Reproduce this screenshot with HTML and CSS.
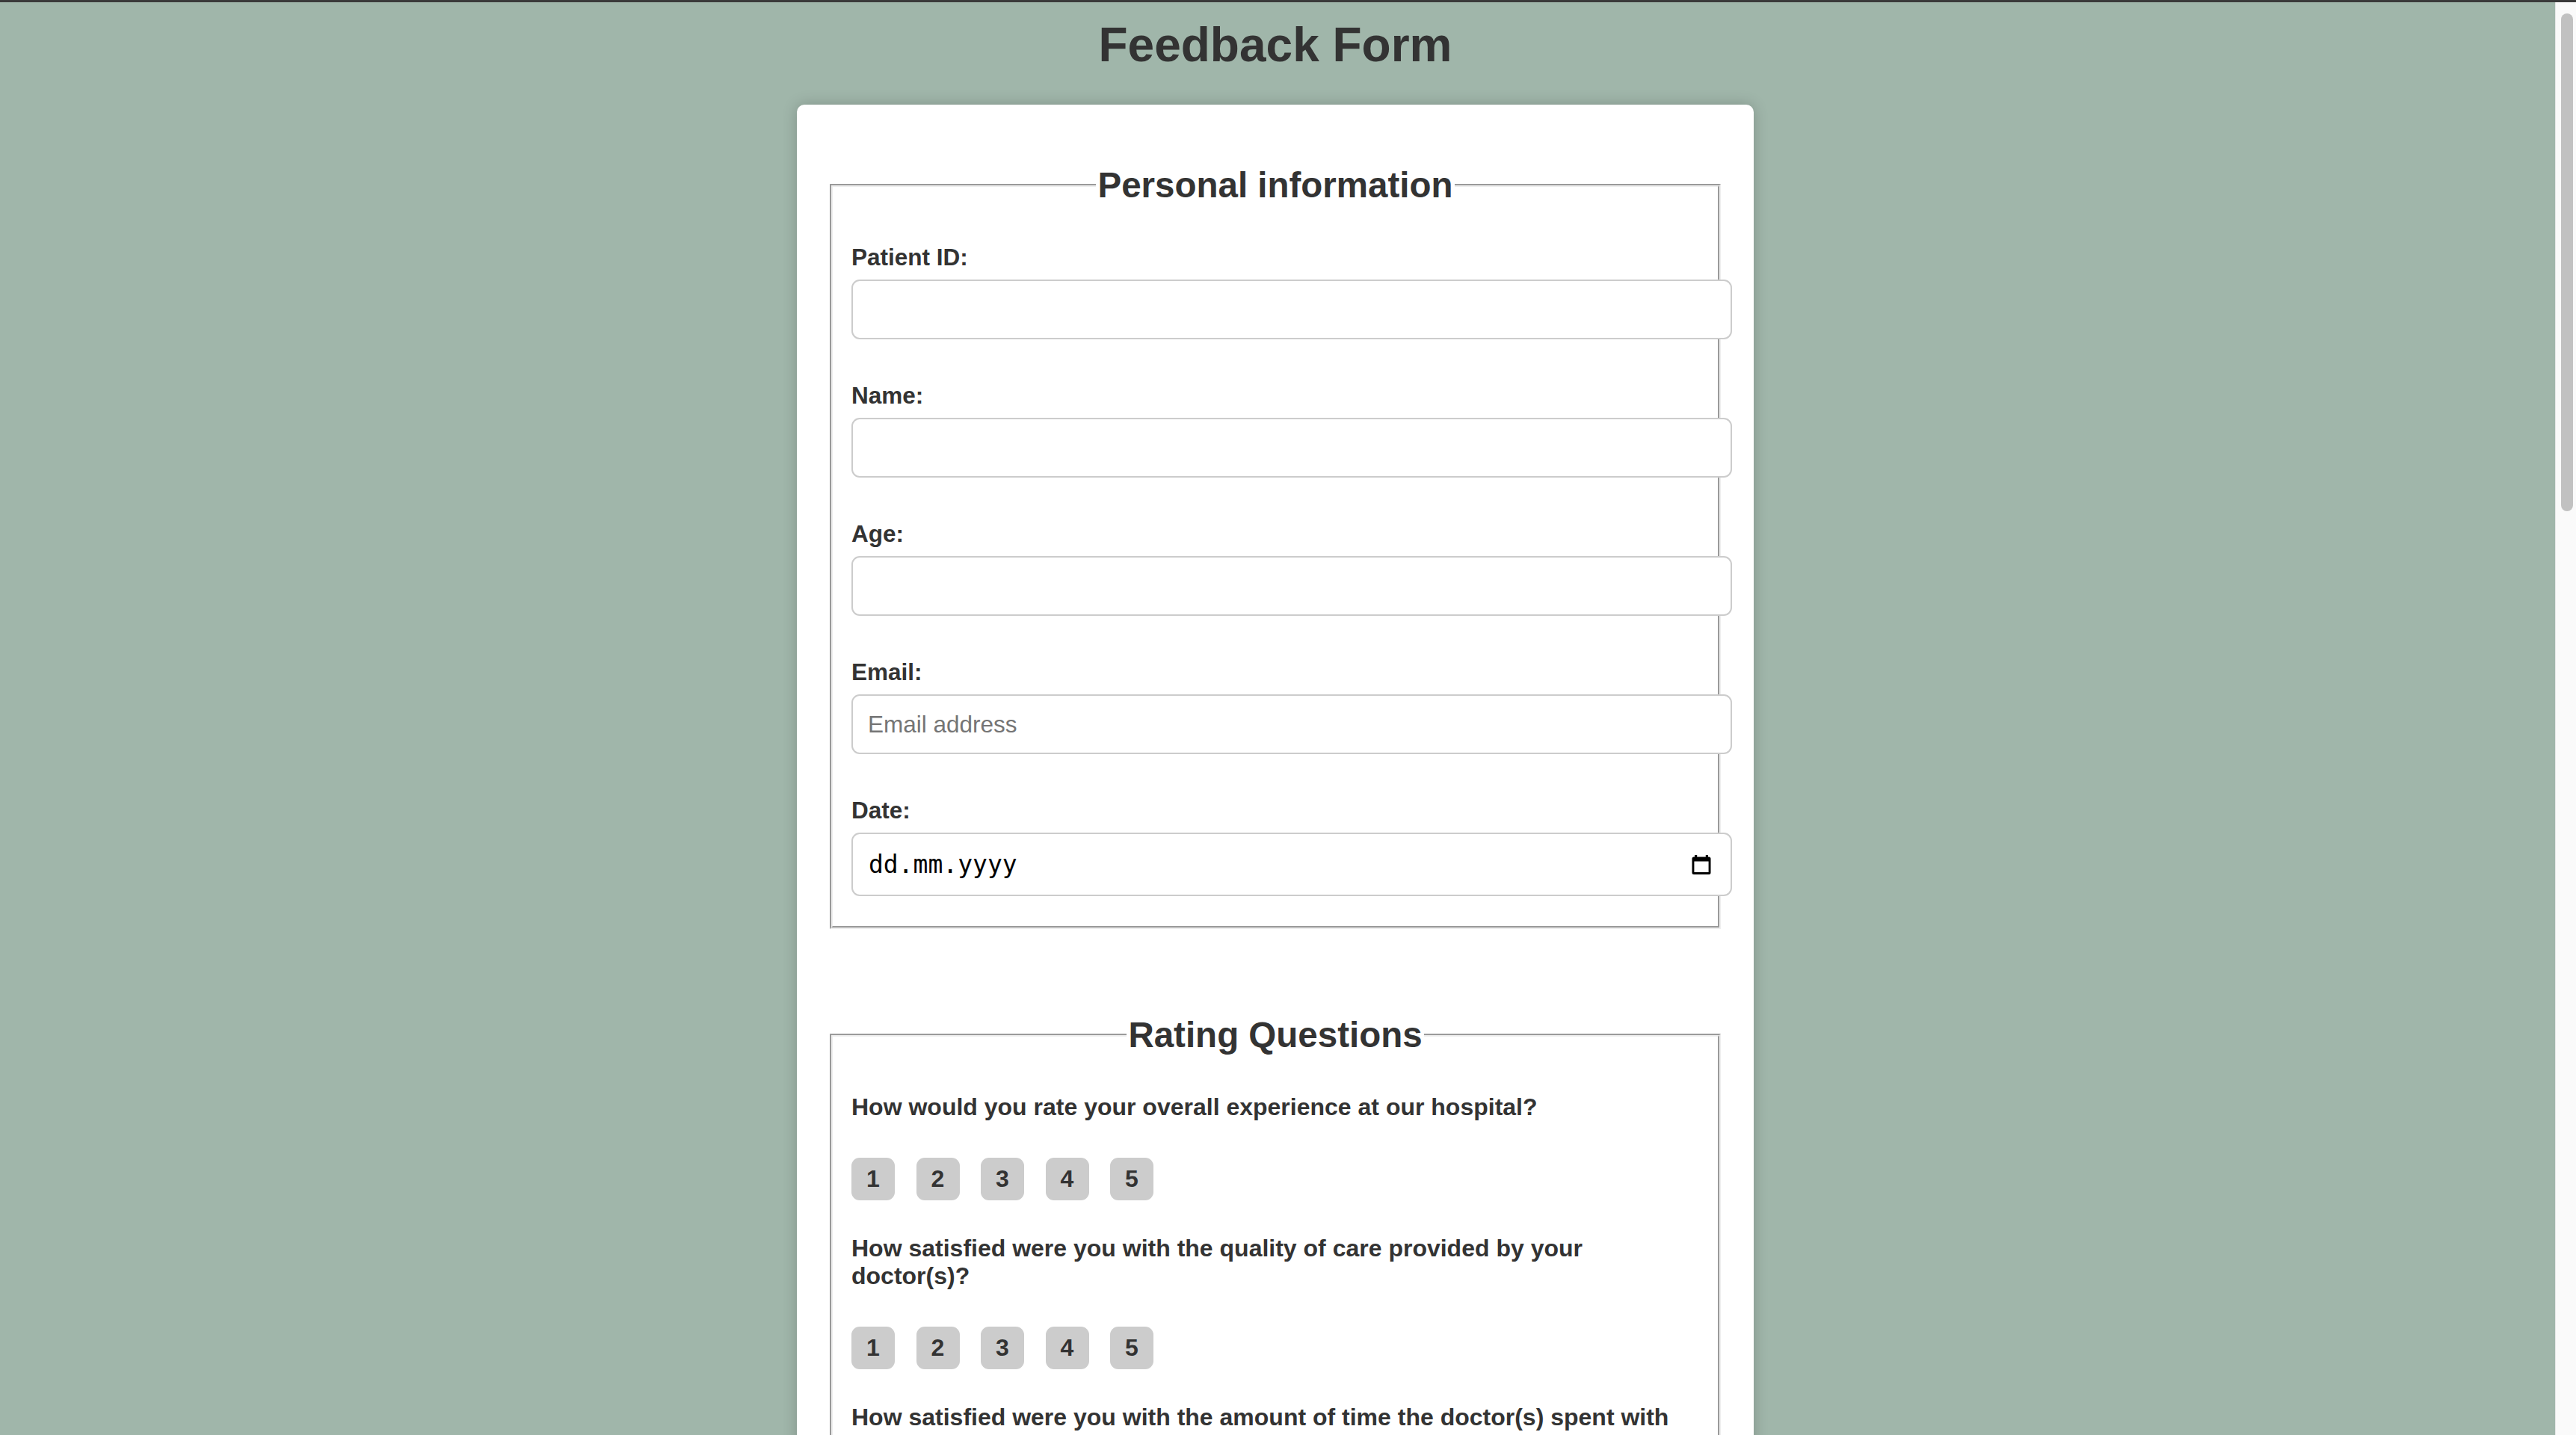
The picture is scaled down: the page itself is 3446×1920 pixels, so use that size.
FILE: index.html
```html
<!DOCTYPE html>
<html lang="en">
<head>
<meta charset="utf-8">
<title>Feedback Form</title>
<link rel="stylesheet" href="styles.css">
</head>
<body>
<div class="topbar"></div>
<div class="viewport">
  <main class="page">
    <h1 class="title">Feedback Form</h1>
    <form class="card">
      <fieldset class="group">
        <legend class="group-title">Personal information</legend>
        <label class="field-label" for="pid">Patient ID:</label>
        <input class="field" id="pid" type="text">
        <label class="field-label" for="name">Name:</label>
        <input class="field" id="name" type="text">
        <label class="field-label" for="age">Age:</label>
        <input class="field" id="age" type="text">
        <label class="field-label" for="email">Email:</label>
        <input class="field" id="email" type="email" placeholder="Email address">
        <label class="field-label" for="date">Date:</label>
        <div class="field field-date" id="date">
          <span class="date-text">dd.mm.yyyy</span>
          <svg class="date-icon" viewBox="0 0 26 26" width="26" height="26" aria-hidden="true">
            <rect x="4" y="0" width="3.2" height="4" fill="#000"/>
            <rect x="18.8" y="0" width="3.2" height="4" fill="#000"/>
            <path fill="#000" fill-rule="evenodd" d="M3 2.5h20a2.5 2.5 0 0 1 2.5 2.5v18.5a2.5 2.5 0 0 1-2.5 2.5H3a2.5 2.5 0 0 1-2.5-2.5V5A2.5 2.5 0 0 1 3 2.5zM3.4 8.6v14.5h19.2V8.6z"/>
          </svg>
        </div>
      </fieldset>

      <fieldset class="group">
        <legend class="group-title">Rating Questions</legend>
        <p class="question">How would you rate your overall experience at our hospital?</p>
        <div class="rating">
          <span class="rate">1</span><span class="rate">2</span><span class="rate">3</span><span class="rate">4</span><span class="rate">5</span>
        </div>
        <p class="question">How satisfied were you with the quality of care provided by your doctor(s)?</p>
        <div class="rating">
          <span class="rate">1</span><span class="rate">2</span><span class="rate">3</span><span class="rate">4</span><span class="rate">5</span>
        </div>
        <p class="question">How satisfied were you with the amount of time the doctor(s) spent with you?</p>
        <div class="rating">
          <span class="rate">1</span><span class="rate">2</span><span class="rate">3</span><span class="rate">4</span><span class="rate">5</span>
        </div>
      </fieldset>
    </form>
  </main>
  <div class="scrollbar"><div class="scrollbar-thumb"></div></div>
</div>
</body>
</html>
```

FILE: styles.css
```css
html, body {
  margin: 0;
  height: 100%;
  overflow: hidden;
}

body {
  display: flex;
  flex-direction: column;
  font-family: "Liberation Sans", Arial, sans-serif;
  color: #333;
}

.topbar {
  height: 3px;
  background: #3a3a3a;
  flex: none;
}

.viewport {
  flex: 1;
  min-height: 0;
  display: flex;
}

.page {
  flex: 1;
  min-width: 0;
  overflow: hidden;
  background: #a0b6aa;
  padding-right: 6px;
}

.title {
  margin: 20px 0 43px;
  font-size: 64px;
  line-height: 74px;
  font-weight: bold;
  text-align: center;
  color: #333;
}

.card {
  width: 1280px;
  box-sizing: border-box;
  margin: 0 auto;
  padding: 80px 44px 44px;
  background: #fff;
  border-radius: 10px;
  box-shadow: 0 0 20px rgba(0, 0, 0, 0.2);
  display: flex;
  flex-direction: column;
  gap: 114px;
}

.group {
  margin: 0;
  min-width: 0;
  border: 4px groove #eeeeee;
  padding: 51px 25px 40px;
}

.group-title {
  margin: 0 auto;
  padding: 0 2px;
  font-size: 47.5px;
  line-height: 55px;
  font-weight: bold;
  color: #333;
}

.field-label {
  display: block;
  font-size: 31.5px;
  line-height: 36px;
  font-weight: bold;
  margin-bottom: 12px;
}

.field {
  display: block;
  width: 100%;
  height: 36px;
  margin: 0 0 57px;
  padding: 20px;
  border: 2px solid #ccc;
  border-radius: 11px;
  font-family: "Liberation Sans", Arial, sans-serif;
  font-size: 31.5px;
  line-height: 36px;
  color: #000;
  background: #fff;
  outline: none;
}

.field::placeholder {
  color: #757575;
}

.field-date {
  display: flex;
  align-items: center;
  justify-content: space-between;
  height: 81px;
  padding: 0 20px;
  margin-bottom: 0;
}

.date-text {
  font-family: "DejaVu Sans Mono", "Liberation Mono", monospace;
  font-size: 33px;
  color: #000;
  margin-left: 1px;
}

.date-icon {
  display: block;
  margin-right: 6px;
}

.question {
  margin: 0 0 49px;
  font-size: 32px;
  line-height: 37px;
  font-weight: bold;
  color: #333;
}

.rating {
  display: flex;
  gap: 28.5px;
  margin-bottom: 46px;
}

.rate {
  width: 58px;
  height: 57px;
  border-radius: 11px;
  background: #ccc;
  color: #333;
  font-size: 32px;
  font-weight: bold;
  display: flex;
  align-items: center;
  justify-content: center;
}

.scrollbar {
  flex: none;
  width: 27px;
  background: #fafafa;
  border-left: 1px solid #e6e8e7;
}

.scrollbar-thumb {
  width: 16px;
  height: 666px;
  margin: 15px 0 0 7px;
  border-radius: 8px;
  background: #c1c1c1;
}
```
